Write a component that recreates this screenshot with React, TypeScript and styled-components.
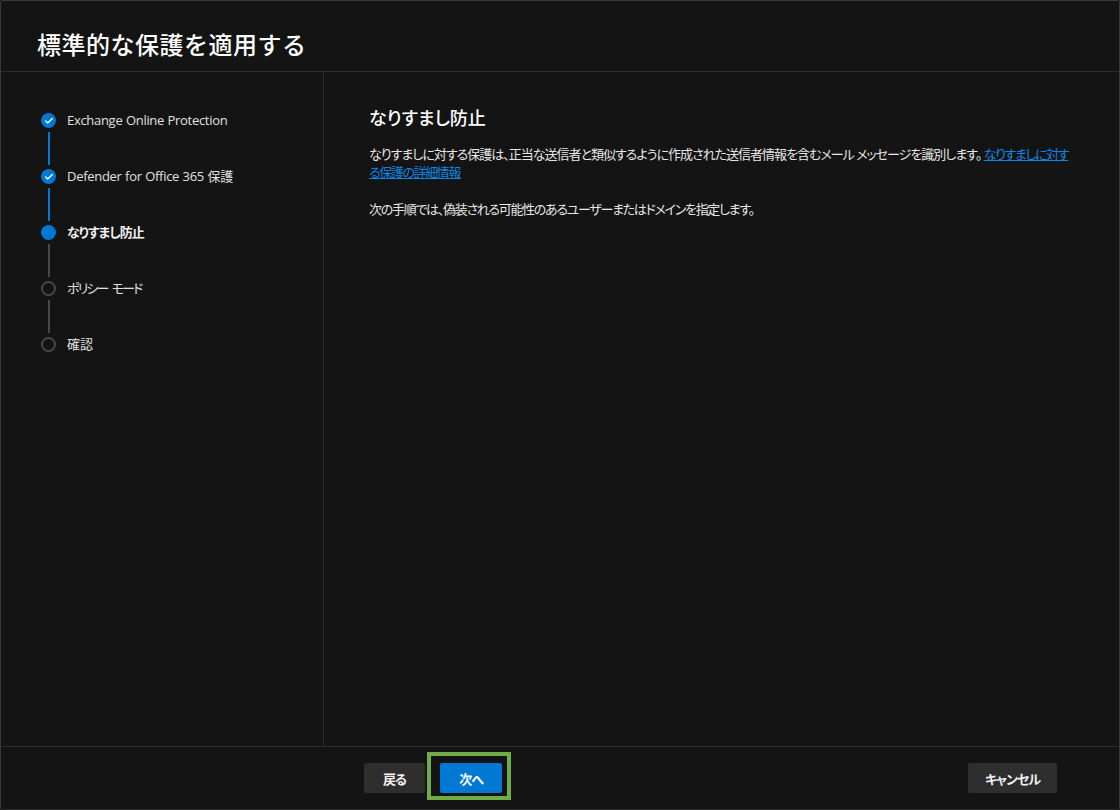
import { createGlobalStyle } from "styled-components";
import styled from "styled-components";
import { Check } from "lucide-react";

const GlobalStyle = createGlobalStyle`
  html, body {
    margin: 0;
    padding: 0;
    background: #000;
  }
  * {
    box-sizing: border-box;
  }
`;

type StepState = "done" | "current" | "todo";

const steps: { label: string; state: StepState; spacing: number }[] = [
  { label: "Exchange Online Protection", state: "done", spacing: -0.3 },
  { label: "Defender for Office 365 保護", state: "done", spacing: -0.3 },
  { label: "なりすまし防止", state: "current", spacing: -1 },
  { label: "ポリシー モード", state: "todo", spacing: -1.9 },
  { label: "確認", state: "todo", spacing: 0 },
];

const App = () => {
  return (
    <>
      <GlobalStyle />
      <Panel>
        <Header>
          <Title>標準的な保護を適用する</Title>
        </Header>
        <Body>
          <Sidebar>
            {steps.map((step, idx) => (
              <Step key={step.label}>
                <Marker>
                  <Dot $state={step.state}>
                    {step.state === "done" && <Check size={10} strokeWidth={3.5} color="#fff" />}
                  </Dot>
                  {idx < steps.length - 1 && <Line $active={step.state === "done"} />}
                </Marker>
                <StepLabel $current={step.state === "current"} $spacing={step.spacing}>
                  {step.label}
                </StepLabel>
              </Step>
            ))}
          </Sidebar>
          <Content>
            <Heading>なりすまし防止</Heading>
            <Paragraph $spacing={-1}>
              なりすましに対する保護は、正当な送信者と類似するように作成された送信者情報を含むメール メッセージを識別します。{" "}
              <Link href="#">なりすましに対する保護の詳細情報</Link>
            </Paragraph>
            <Paragraph $spacing={-1.3}>次の手順では、偽装される可能性のあるユーザーまたはドメインを指定します。</Paragraph>
          </Content>
        </Body>
        <Footer>
          <FooterLeft>
            <Button>戻る</Button>
            <PrimaryButton>次へ</PrimaryButton>
          </FooterLeft>
          <CancelButton>キャンセル</CancelButton>
        </Footer>
      </Panel>
    </>
  );
};
export default App;

const fontStack = `"Open Sans", "Noto Sans CJK JP", sans-serif`;

const Panel = styled.div`
  display: flex;
  flex-direction: column;
  width: 1120px;
  height: 810px;
  background: #141414;
  border: 1px solid #3a3a3a;
  border-bottom-color: #2a2a2a;
  border-radius: 2px;
  font-family: ${fontStack};
  font-feature-settings: "palt";
  overflow: hidden;
`;
const Header = styled.div`
  display: flex;
  align-items: center;
  height: 71px;
  padding: 18px 0 0 36px;
  border-bottom: 1px solid #2d2d2d;
  flex-shrink: 0;
`;
const Title = styled.h1`
  margin: 0;
  font-size: 24px;
  line-height: 32px;
  font-weight: 500;
  letter-spacing: 0.5px;
  color: #fff;
  font-feature-settings: normal;
`;
const Body = styled.div`
  display: flex;
  flex: 1;
  min-height: 0;
`;
const Sidebar = styled.div`
  display: flex;
  flex-direction: column;
  width: 323px;
  padding: 41px 0 0 40px;
  border-right: 1px solid #2d2d2d;
  flex-shrink: 0;
`;
const Step = styled.div`
  display: flex;
  gap: 11px;
  height: 56px;
`;
const Marker = styled.div`
  display: flex;
  flex-direction: column;
  align-items: center;
  gap: 4px;
  width: 15px;
`;
const Dot = styled.div<{ $state: StepState }>`
  display: flex;
  align-items: center;
  justify-content: center;
  width: 15px;
  height: 15px;
  border-radius: 50%;
  flex-shrink: 0;
  background: ${({ $state }) => ($state === "todo" ? "transparent" : "#0078d4")};
  border: ${({ $state }) => ($state === "todo" ? "2px solid #484848" : "none")};
`;
const Line = styled.div<{ $active: boolean }>`
  width: 2px;
  height: 33px;
  background: ${({ $active }) => ($active ? "#0078d4" : "#484848")};
`;
const StepLabel = styled.span<{ $current: boolean; $spacing: number }>`
  font-size: 13px;
  line-height: 15px;
  letter-spacing: ${({ $spacing }) => $spacing}px;
  word-spacing: ${({ $spacing }) => -$spacing * 1.5}px;
  color: ${({ $current }) => ($current ? "#f0f0f0" : "#e0e0e0")};
  font-weight: ${({ $current }) => ($current ? 700 : 400)};
`;
const Content = styled.div`
  flex: 1;
  padding: 33px 49px 0 45px;
`;
const Heading = styled.h2`
  margin: 0 0 14px;
  font-size: 18px;
  line-height: 26px;
  font-weight: 500;
  color: #fff;
`;
const Paragraph = styled.p<{ $spacing: number }>`
  margin: 0 0 19px;
  font-size: 13px;
  line-height: 18px;
  letter-spacing: ${({ $spacing }) => $spacing}px;
  color: #e6e6e6;
`;
const Link = styled.a`
  color: #0f86e4;
  letter-spacing: -1.4px;
  text-decoration: underline;
`;
const Footer = styled.div`
  display: flex;
  align-items: center;
  justify-content: space-between;
  height: 63px;
  padding: 0 62px 0 363px;
  border-top: 1px solid #2d2d2d;
  flex-shrink: 0;
`;
const FooterLeft = styled.div`
  display: flex;
  gap: 15px;
`;
const Button = styled.button`
  height: 30px;
  width: 61px;
  padding: 0;
  border: none;
  border-radius: 2px;
  background: #2e2e2e;
  color: #f0f0f0;
  font-family: ${fontStack};
  font-feature-settings: "palt";
  font-size: 13px;
  font-weight: 700;
  letter-spacing: -1px;
`;
const PrimaryButton = styled(Button)`
  position: relative;
  width: 62px;
  background: #0078d4;
  color: #fff;

  &::after {
    content: "";
    position: absolute;
    inset: -11px -9px -7px -13px;
    border: 4px solid #70ad47;
  }
`;
const CancelButton = styled(Button)`
  width: 89px;
`;
